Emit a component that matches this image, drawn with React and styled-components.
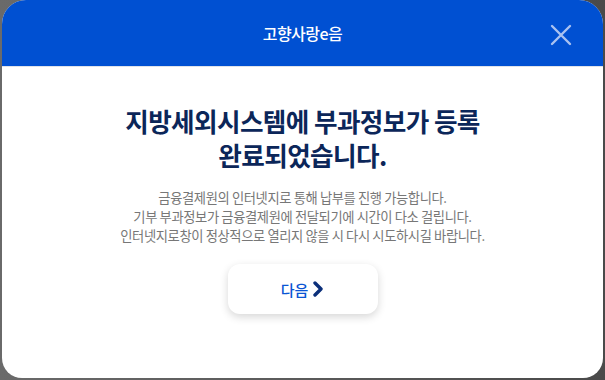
import React from "react";
import styled, { createGlobalStyle } from "styled-components";

const GlobalStyle = createGlobalStyle`
  html, body {
    margin: 0;
    padding: 0;
    background: #5c5c5c;
  }
  body {
    font-family: "Noto Sans CJK KR", "Noto Sans", sans-serif;
  }
`;

const Backdrop = styled.div`
  width: 605px;
  height: 380px;
  padding: 0 2px 2px 2px;
  box-sizing: border-box;
  background: linear-gradient(90deg, #6a6a6a 0%, #4a4a4a 100%);
`;

const Modal = styled.div`
  height: 100%;
  background: #fff;
  border-radius: 24px 24px 20px 20px;
  overflow: hidden;
  display: flex;
  flex-direction: column;
`;

const Header = styled.div`
  height: 66px;
  background: #0050d2;
  border-bottom: 1px solid #dfe3ea;
  display: flex;
  align-items: center;
  justify-content: center;
  position: relative;
  flex-shrink: 0;

  h1 {
    margin: 0;
    color: #fff;
    font-size: 16px;
    font-weight: 500;
    letter-spacing: -0.5px;
  }
`;

const CloseBtn = styled.button`
  position: absolute;
  right: 31px;
  top: 24px;
  width: 22px;
  height: 22px;
  padding: 0;
  border: 0;
  background: none;
  cursor: pointer;
  svg {
    display: block;
  }
`;

const Body = styled.div`
  display: flex;
  flex-direction: column;
  align-items: center;
  padding-top: 37px;
`;

const Title = styled.h2`
  margin: 0;
  text-align: center;
  color: #0b2659;
  font-size: 25.6px;
  font-weight: 700;
  line-height: 34px;
  letter-spacing: -0.6px;
`;

const Desc = styled.p`
  margin: 16px 0 0;
  text-align: center;
  color: #777;
  font-size: 13.3px;
  line-height: 19px;
  letter-spacing: -0.4px;
`;

const NextBtn = styled.button`
  margin-top: 19px;
  width: 150px;
  height: 50px;
  border: 0;
  border-radius: 12px;
  background: #fff;
  box-shadow: 0 3px 8px rgba(0, 0, 0, 0.16);
  display: flex;
  align-items: center;
  justify-content: center;
  gap: 4px;
  color: #0a55d4;
  font-family: inherit;
  font-size: 15px;
  font-weight: 500;
  cursor: pointer;
  svg {
    display: block;
  }
`;

export default function App() {
  return (
    <>
      <GlobalStyle />
      <Backdrop>
        <Modal>
          <Header>
            <h1>고향사랑e음</h1>
            <CloseBtn aria-label="닫기">
              <svg width="22" height="22" viewBox="0 0 22 22">
                <path
                  d="M2 2 L20 20 M20 2 L2 20"
                  stroke="#a9c2f0"
                  strokeWidth="2.4"
                  strokeLinecap="round"
                />
              </svg>
            </CloseBtn>
          </Header>
          <Body>
            <Title>
              지방세외시스템에 부과정보가 등록
              <br />
              완료되었습니다.
            </Title>
            <Desc>
              금융결제원의 인터넷지로 통해 납부를 진행 가능합니다.
              <br />
              기부 부과정보가 금융결제원에 전달되기에 시간이 다소 걸립니다.
              <br />
              인터넷지로창이 정상적으로 열리지 않을 시 다시 시도하시길 바랍니다.
            </Desc>
            <NextBtn>
              다음
              <svg width="12" height="16" viewBox="0 0 12 16">
                <path
                  d="M3 2 L9 8 L3 14"
                  fill="none"
                  stroke="#0b2f7a"
                  strokeWidth="3.4"
                  strokeLinecap="round"
                  strokeLinejoin="round"
                />
              </svg>
            </NextBtn>
          </Body>
        </Modal>
      </Backdrop>
    </>
  );
}
